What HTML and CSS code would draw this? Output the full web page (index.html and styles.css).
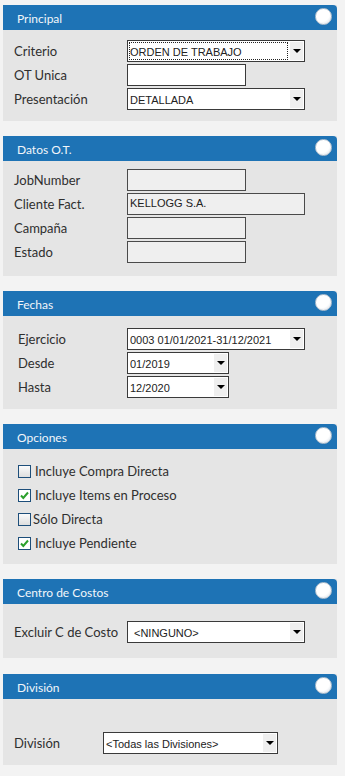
FILE: index.html
```html
<!DOCTYPE html>
<html lang="es">
<head>
  <meta charset="UTF-8">
  <title>Filtros de Orden de Trabajo</title>
  <link rel="stylesheet" href="styles.css">
</head>
<body>

  <!-- Principal -->
  <div class="panel">
    <div class="panelHead">
      <span class="panelTitle">Principal</span>
      <span class="ball"></span>
    </div>
    <div class="panelBody grid principal">
      <label for="criterio">Criterio</label>
      <div class="drop wide">
        <select id="criterio" class="focused"><option>ORDEN DE TRABAJO</option></select>
        <span class="arrow"></span>
      </div>
      <label for="otUnica">OT Unica</label>
      <input type="text" id="otUnica" class="box short">
      <label for="presentacion">Presentación</label>
      <div class="drop wide">
        <select id="presentacion"><option>DETALLADA</option></select>
        <span class="arrow"></span>
      </div>
    </div>
  </div>

  <!-- Datos O.T. -->
  <div class="panel">
    <div class="panelHead">
      <span class="panelTitle">Datos O.T.</span>
      <span class="ball"></span>
    </div>
    <div class="panelBody grid datos">
      <label>JobNumber</label>
      <input type="text" class="box short off" disabled>
      <label>Cliente Fact.</label>
      <div class="box wide off topText">KELLOGG S.A.</div>
      <label>Campaña</label>
      <input type="text" class="box short off" disabled>
      <label>Estado</label>
      <input type="text" class="box short off" disabled>
    </div>
  </div>

  <!-- Fechas -->
  <div class="panel">
    <div class="panelHead">
      <span class="panelTitle">Fechas</span>
      <span class="ball"></span>
    </div>
    <div class="panelBody grid fechas">
      <label>Ejercicio</label>
      <div class="drop wide">
        <select><option>0003 01/01/2021-31/12/2021</option></select>
        <span class="arrow"></span>
      </div>
      <label>Desde</label>
      <div class="drop mid">
        <select><option>01/2019</option></select>
        <span class="arrow"></span>
      </div>
      <label>Hasta</label>
      <div class="drop mid">
        <select><option>12/2020</option></select>
        <span class="arrow"></span>
      </div>
    </div>
  </div>

  <!-- Opciones -->
  <div class="panel">
    <div class="panelHead">
      <span class="panelTitle">Opciones</span>
      <span class="ball"></span>
    </div>
    <div class="panelBody opciones">
      <label class="check"><span class="tick"></span>Incluye Compra Directa</label>
      <label class="check"><span class="tick on"><svg viewBox="0 0 11 11" width="11" height="11"><path d="M2 5.5 L4.3 8 L9 2.5" fill="none" stroke="#2ca02c" stroke-width="2"/></svg></span>Incluye Items en Proceso</label>
      <label class="check tight"><span class="tick"></span>Sólo Directa</label>
      <label class="check"><span class="tick on"><svg viewBox="0 0 11 11" width="11" height="11"><path d="M2 5.5 L4.3 8 L9 2.5" fill="none" stroke="#2ca02c" stroke-width="2"/></svg></span>Incluye Pendiente</label>
    </div>
  </div>

  <!-- Centro de Costos -->
  <div class="panel costosPanel">
    <div class="panelHead">
      <span class="panelTitle">Centro de Costos</span>
      <span class="ball"></span>
    </div>
    <div class="panelBody grid costos">
      <label>Excluir C de Costo</label>
      <div class="drop wide">
        <select class="indent"><option>&lt;NINGUNO&gt;</option></select>
        <span class="arrow"></span>
      </div>
    </div>
  </div>

  <!-- División -->
  <div class="panel">
    <div class="panelHead">
      <span class="panelTitle">División</span>
      <span class="ball"></span>
    </div>
    <div class="panelBody grid division">
      <label>División</label>
      <div class="drop div">
        <select><option>&lt;Todas las Divisiones&gt;</option></select>
        <span class="arrow"></span>
      </div>
    </div>
  </div>

</body>
</html>
```

FILE: styles.css
```css
body {
  margin: 0;
  padding: 5px 8px 0 3px;
  background: #f3f3f3;
  font-family: Lato, "Open Sans", sans-serif;
  color: #2f2f2f;
}

.panel {
  background: #e5e5e5;
  margin-bottom: 15px;
}

.costosPanel { margin-bottom: 16px; }

.panelHead {
  background: #1e73b5;
  height: 25px;
  border-radius: 0 4px 0 0;
  display: flex;
  align-items: center;
  justify-content: space-between;
  padding: 0 5px 0 14px;
}

.panelTitle {
  color: #f2f6fa;
  font-size: 12px;
  padding-top: 1px;
}

/* bolita blanca del encabezado */
.ball {
  width: 15px;
  height: 15px;
  border-radius: 50%;
  border: 1px solid #b7c3cf;
  background: radial-gradient(circle at 40% 35%, #ffffff 55%, #dfe5ec 85%, #aeb9c5 100%);
  margin-top: -3px;
}

.panelBody {
  padding: 10px 0 11px 11px;
}

.grid {
  display: grid;
  grid-template-columns: 113px auto;
  justify-items: start;
  align-items: center;
  row-gap: 2px;
}

.grid label {
  font-size: 13px;
  line-height: 16px;
}

.datos { padding: 8px 0 13px 11px; row-gap: 2px; }
.fechas { padding: 12px 0 11px 15px; grid-template-columns: 109px auto; }
.costos { padding: 17px 0 15px 11px; }
.division { padding: 33px 0 11px 11px; grid-template-columns: 89px auto; }

/* campos */
.box {
  box-sizing: border-box;
  height: 22px;
  border: 1px solid #3a3a3a;
  background: #ffffff;
  margin: 0;
  padding: 0 2px;
  font-family: "Liberation Sans", Arial, sans-serif;
  font-size: 11px;
  color: #222222;
}

.off { background: #efefef; border-color: #4a4a4a; }
.short { width: 119px; }
.wide { width: 178px; }
.mid { width: 102px; }
.div { width: 175px; }

.topText {
  line-height: 14px;
  padding-top: 2px;
}

/* combos */
.drop {
  box-sizing: border-box;
  height: 22px;
  border: 1px solid #3a3a3a;
  background: #ffffff;
  display: flex;
  align-items: stretch;
  padding: 1px;
}

.drop select {
  flex: 1;
  min-width: 0;
  -webkit-appearance: none;
  appearance: none;
  border: none;
  outline: none;
  background: transparent;
  margin: 0;
  padding: 2px 0 0 1px;
  font-family: "Liberation Sans", Arial, sans-serif;
  font-size: 11px;
  color: #222222;
}

.drop select.focused { outline: 1px dotted #222222; outline-offset: -1px; }
.drop select.indent { padding-left: 5px; }

.arrow {
  width: 13px;
  margin-left: 2px;
  background: #efefef;
  display: flex;
  align-items: center;
  justify-content: center;
}

.arrow::after {
  content: "";
  border-left: 4px solid transparent;
  border-right: 4px solid transparent;
  border-top: 4px solid #000000;
}

/* opciones */
.opciones {
  padding: 10px 0 9px 15px;
  display: flex;
  flex-direction: column;
}

.check {
  height: 24px;
  display: flex;
  align-items: center;
  font-size: 13px;
}

.tick {
  box-sizing: border-box;
  width: 13px;
  height: 13px;
  border: 1px solid #1d4e7a;
  background: linear-gradient(#fbfbfb, #dedede);
  margin-right: 4px;
  display: flex;
  align-items: center;
  justify-content: center;
}

.tick.on { background: #ffffff; }
.check.tight .tick { margin-right: 2px; }
```
